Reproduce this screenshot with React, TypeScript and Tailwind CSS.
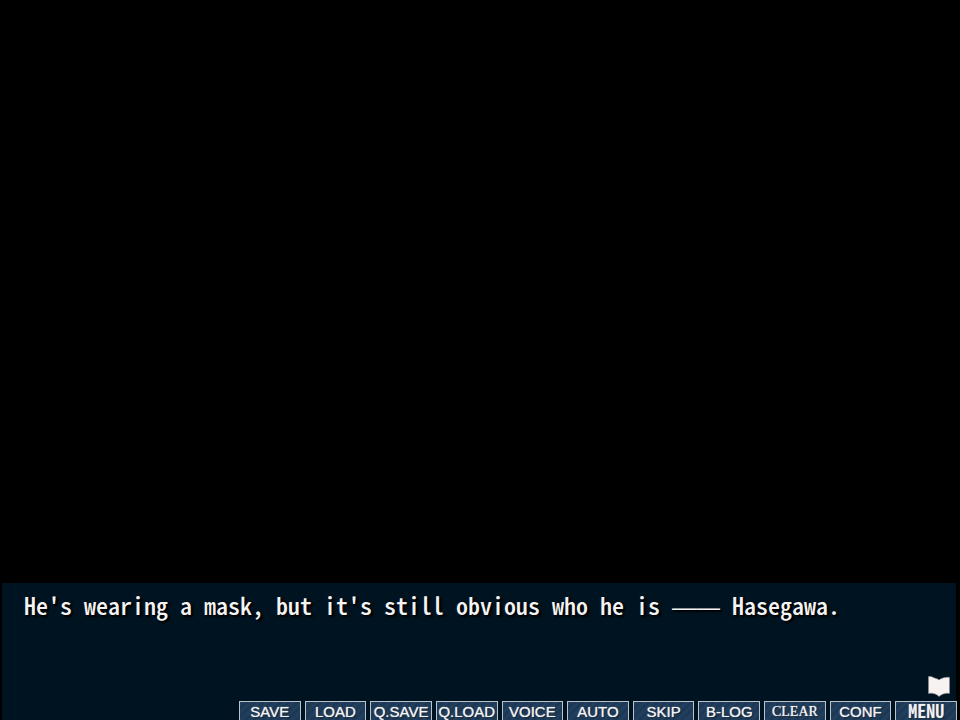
import { clsx } from "clsx";

type MenuItem = {
  label: string;
  className?: string;
};

const sans = "font-['Liberation_Sans',sans-serif] text-[15px]";

const menuItems: MenuItem[] = [
  { label: "SAVE" },
  { label: "LOAD" },
  { label: "Q.SAVE" },
  { label: "Q.LOAD" },
  { label: "VOICE" },
  { label: "AUTO" },
  { label: "SKIP" },
  { label: "B-LOG" },
  {
    label: "CLEAR",
    className: "font-['Liberation_Serif',serif] text-[14px] pt-0.5",
  },
  { label: "CONF" },
  {
    label: "MENU",
    className:
      "font-['Noto_Sans_CJK_JP',sans-serif] text-[18px] pb-0.5 font-medium [font-feature-settings:'hwid']",
  },
];

// Open book shown while the game waits for a click
function PageIcon() {
  return (
    <svg width="24" height="24" viewBox="0 0 24 24" aria-hidden="true">
      <path
        d="M1.5 1.5C4 1.2 5.5 2 7.5 3L12 4.5L16 3C18.5 2.2 20 2.2 22.5 2.5V18.5C19 18 15.5 18.5 12 21.5C9 18.5 5 17.8 1.5 18.5Z"
        fill="#f7f1f0"
        stroke="#8d9196"
        strokeWidth="0.6"
      />
      <path d="M9 1.5L12 4.8L14 3L13 1.5Z" fill="#001320" />
    </svg>
  );
}

function MenuButton({ label, className }: MenuItem) {
  return (
    <button
      type="button"
      className={clsx(
        "flex h-5 items-center justify-center whitespace-nowrap border border-[#b9c3cd] leading-none text-[#f2f2f2]",
        "bg-[repeating-linear-gradient(135deg,#213f5d_0px,#213f5d_3px,#1c3854_3px,#1c3854_6px)]",
        "[text-shadow:0_0_1px_#d8dde2,1px_1px_1px_#0a1a2a]",
        className ?? sans
      )}
    >
      {label}
    </button>
  );
}

export default function App() {
  return (
    <div className="flex h-screen flex-col justify-end overflow-hidden bg-black">
      <main className="-mb-px ml-0.5 mr-1 flex flex-col bg-[#001320]">
        <p className="min-h-[92px] px-[22px] pt-1.5 font-['Noto_Sans_CJK_JP',sans-serif] text-[24px] font-medium leading-8 text-[#f4f4f4] [font-feature-settings:'hwid'] [text-shadow:1px_1px_1px_#000,2px_2px_2px_#000]">
          He's wearing a mask, but it's still obvious who he is{" "}
          <span className="font-['Liberation_Sans',sans-serif]">——</span>{" "}
          Hasegawa.
        </p>
        <div className="flex justify-end px-[5px]">
          <PageIcon />
        </div>
        <nav className="-mr-px mt-0.5 grid w-[718px] grid-cols-11 gap-1 self-end">
          {menuItems.map((item) => (
            <MenuButton key={item.label} {...item} />
          ))}
        </nav>
      </main>
    </div>
  );
}
